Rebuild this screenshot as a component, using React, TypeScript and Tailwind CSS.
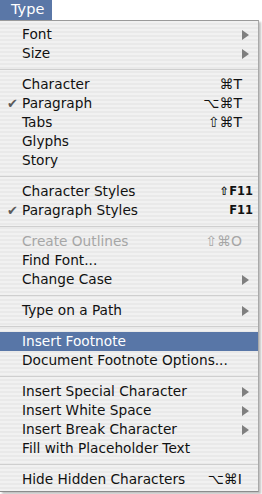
import React from "react";

type Item =
  | { sep: true }
  | {
      sep?: false;
      label: string;
      shortcut?: string;
      sub?: boolean;
      checked?: boolean;
      disabled?: boolean;
      active?: boolean;
      small?: boolean;
    };

const items: Item[] = [
  { label: "Font", sub: true },
  { label: "Size", sub: true },
  { sep: true },
  { label: "Character", shortcut: "⌘T" },
  { label: "Paragraph", shortcut: "⌥⌘T", checked: true },
  { label: "Tabs", shortcut: "⇧⌘T" },
  { label: "Glyphs" },
  { label: "Story" },
  { sep: true },
  { label: "Character Styles", shortcut: "⇧F11", small: true },
  { label: "Paragraph Styles", shortcut: "F11", checked: true, small: true },
  { sep: true },
  { label: "Create Outlines", shortcut: "⇧⌘O", disabled: true },
  { label: "Find Font..." },
  { label: "Change Case", sub: true },
  { sep: true },
  { label: "Type on a Path", sub: true },
  { sep: true },
  { label: "Insert Footnote", active: true },
  { label: "Document Footnote Options..." },
  { sep: true },
  { label: "Insert Special Character", sub: true },
  { label: "Insert White Space", sub: true },
  { label: "Insert Break Character", sub: true },
  { label: "Fill with Placeholder Text" },
  { sep: true },
  { label: "Hide Hidden Characters", shortcut: "⌥⌘I" },
];

function Arrow({ active }: { active?: boolean }) {
  return (
    <svg width="7" height="10" viewBox="0 0 7 10" className="block">
      <polygon points="0,0 7,5 0,10" fill={active ? "#ffffff" : "#7f7f7f"} />
    </svg>
  );
}

export default function App() {
  return (
    <div
      className="w-[262px] h-[494px] bg-white overflow-hidden text-[13.7px] text-[#111]"
      style={{ fontFamily: '"DejaVu Sans", "Liberation Sans", sans-serif' }}
    >
      {/* menu bar title */}
      <div className="h-[20px] flex">
        <div className="w-[52px] bg-[#5a77a7] text-white flex items-center pl-[11px] text-[14.5px]">
          Type
        </div>
      </div>

      {/* dropdown */}
      <div className="w-[259px] h-[472px] border-t border-[#9a9a9a] border-r border-b border-r-[#a9a9a9] border-b-[#8c8c8c] shadow-[2px_2px_2px_rgba(0,0,0,0.25)] bg-[#efefef] bg-[repeating-linear-gradient(180deg,#f1f1f1_0px,#f1f1f1_2px,#e9e9e9_2px,#e9e9e9_4px)] pt-[4px]">
        {items.map((it, i) =>
          it.sep ? (
            <div key={i} className="h-[12px] flex items-center">
              <div className="w-full h-px bg-[#cfcfcf]" />
            </div>
          ) : (
            <div
              key={i}
              className={`h-[19px] flex items-center pl-[22px] pr-[7px] relative ${
                it.active ? "bg-[#5876a7] text-white" : ""
              } ${it.disabled ? "text-[#a6a6a6]" : ""}`}
            >
              {it.checked && (
                <span className="absolute left-[7px] text-[13px] text-[#5a5a5a]">✔</span>
              )}
              <span className="flex-1 whitespace-nowrap">{it.label}</span>
              {it.shortcut && (
                <span
                  className={`whitespace-nowrap ${
                    it.small
                      ? "text-[11.5px] font-semibold mr-[-2px]"
                      : "text-[14px] mr-[9px]"
                  }`}
                >
                  {it.shortcut}
                </span>
              )}
              {it.sub && (
                <span className="mr-[2px]">
                  <Arrow active={it.active} />
                </span>
              )}
            </div>
          )
        )}
      </div>
    </div>
  );
}
